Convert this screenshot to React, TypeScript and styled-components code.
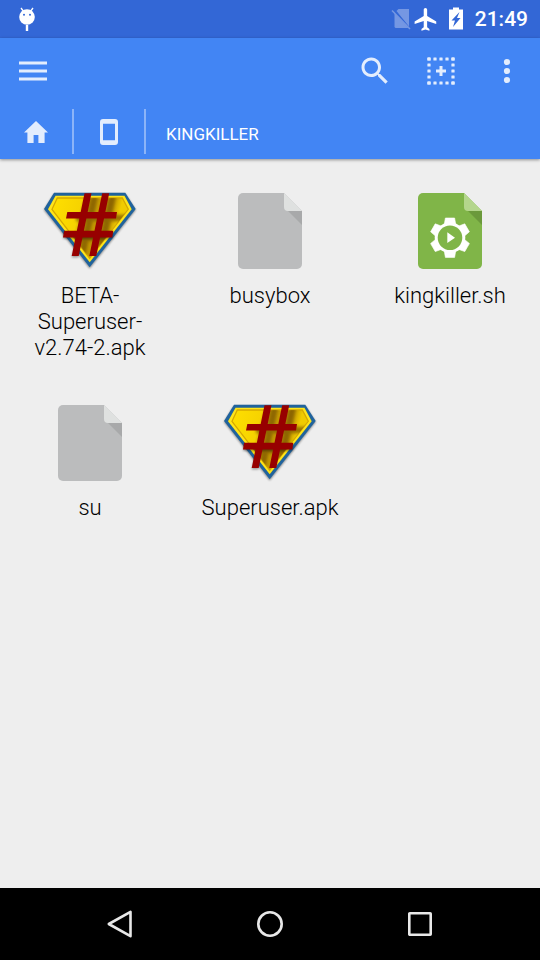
import React from "react";
import styled, { createGlobalStyle } from "styled-components";

const GlobalStyle = createGlobalStyle`
  *, *::before, *::after { box-sizing: border-box; }
  body { margin: 0; background: #eeeeee; font-family: Roboto, sans-serif; }
  button { border: 0; padding: 0; margin: 0; background: none; color: inherit; font: inherit; cursor: pointer; }
  svg { display: block; }
`;

const Screen = styled.div`
  min-height: 100vh;
  display: flex;
  flex-direction: column;
  background: #eeeeee;
`;

const StatusBar = styled.div`
  height: 38px;
  padding: 0 12px 0 15px;
  display: flex;
  align-items: center;
  justify-content: space-between;
  background: #3367d6;
  color: #ffffff;
`;

const StatusIcons = styled.div`
  display: flex;
  align-items: center;
`;

const Clock = styled.time`
  margin-left: 3px;
  font-size: 21px;
  line-height: 40px;
  font-weight: 500;
`;

const AppBar = styled.header`
  background: #4285f4;
  color: #e3edfd;
  box-shadow: 0 1px 3px rgba(0, 0, 0, 0.4);
`;

const Toolbar = styled.div`
  height: 66px;
  display: flex;
`;

const ToolButton = styled.button`
  width: 66px;
  height: 66px;
  display: flex;
  align-items: center;
  justify-content: center;
`;

const Spacer = styled.div`
  flex: 1;
`;

const Breadcrumbs = styled.nav`
  height: 55px;
  padding: 5px 0;
  display: flex;
`;

const IconCrumb = styled.button`
  width: 72px;
  display: flex;
  align-items: center;
  justify-content: center;
  border-right: 2px solid #8cb4f8;

  &:first-child { width: 74px; }
`;

const TextCrumb = styled.button`
  padding: 4px 20px 0;
  font-size: 17px;
  line-height: 24px;
  color: #ffffff;
`;

const FileGrid = styled.main`
  flex: 1;
  padding-top: 24px;
  display: grid;
  grid-template-columns: repeat(3, 1fr);
  align-content: start;
  row-gap: 34px;
`;

const FileTile = styled.button`
  padding: 0 18px;
  display: flex;
  flex-direction: column;
  align-items: center;
  justify-content: flex-start;
  gap: 4px;
`;

const FileName = styled.span`
  max-width: 140px;
  font-size: 22px;
  line-height: 26px;
  font-weight: 300;
  color: #000000;
  text-align: center;
`;

const NavBar = styled.nav`
  height: 72px;
  display: flex;
  justify-content: center;
  background: #000000;
`;

const NavButton = styled.button`
  width: 150px;
  display: flex;
  align-items: center;
  justify-content: center;
`;

const DebugIcon = () => (
  <svg width="24" height="28" viewBox="0 0 24 28" fill="#fff">
    <path d="M6 3l3 4M18 3l-3 4" stroke="#fff" strokeWidth="1.3" />
    <circle cx="12" cy="12" r="7.8" />
    <circle cx="9" cy="9.7" r="1" fill="#3367d6" />
    <circle cx="15" cy="9.7" r="1" fill="#3367d6" />
    <path d="M10.8 20h2.4v6h-2.4z" />
  </svg>
);

const NoSimIcon = () => (
  <svg width="24" height="26" viewBox="0 0 24 26">
    <path d="M10.500 3H21v17.500L8.500 5zM6.500 7l14 15H7.500l-1-1z" fill="#7597e3" />
    <path d="M4 4.500L22 23" stroke="#7597e3" strokeWidth="1.500" />
  </svg>
);

const AirplaneIcon = () => (
  <svg width="28" height="26" viewBox="0 0 24 24">
    <path
      transform="translate(-0.6 -0.3) scale(1.05)"
      fill="#fff"
      d="M21 16v-2l-8-5V3.500c0-.83-.67-1.500-1.500-1.500S10 2.670 10 3.500V9l-8 5v2l8-2.500V19l-2 1.500V22l3.500-1 3.500 1v-1.500L13 19v-5.500l8 2.500z"
    />
  </svg>
);

const BatteryIcon = () => (
  <svg width="32" height="26" viewBox="0 0 32 26">
    <path d="M13 1.500h6v2h4V23.500H9V3.500h4z" fill="#fff" />
    <path d="M19.500 6l-8 8.500h3.500l-2 6.500 7.500-9h-3.500z" fill="#3367d6" />
  </svg>
);

const MenuIcon = () => (
  <svg width="28" height="20" viewBox="0 0 28 20" fill="currentColor">
    <path d="M0 .5h28v3H0zM0 8.500h28v3H0zM0 16.500h28v3H0z" />
  </svg>
);

const SearchIcon = () => (
  <svg width="36" height="36" viewBox="0 0 24 24" fill="currentColor">
    <path d="M15.500 14h-.79l-.28-.27C15.410 12.590 16 11.110 16 9.500 16 5.910 13.090 3 9.500 3S3 5.910 3 9.500 5.910 16 9.500 16c1.610 0 3.090-.59 4.230-1.570l.27.28v.79l5 4.990L20.490 19l-4.990-5zm-6 0C7.010 14 5 11.990 5 9.500S7.010 5 9.500 5 14 7.010 14 9.500 11.990 14 9.500 14z" />
  </svg>
);

const ticks = [0, 6, 12, 18, 24];

const SelectIcon = () => (
  <svg width="28" height="28" viewBox="0 0 28 28" fill="currentColor">
    {ticks.map((t) => (
      <React.Fragment key={t}>
        <rect x={t + 0.4} y=".4" width="3.200" height="3.200" rx=".5" />
        <rect x={t + 0.4} y="24.400" width="3.200" height="3.200" rx=".5" />
        <rect x=".4" y={t + 0.4} width="3.200" height="3.200" rx=".5" />
        <rect x="24.400" y={t + 0.4} width="3.200" height="3.200" rx=".5" />
      </React.Fragment>
    ))}
    <path d="M12.500 9h3v3.500H19v3h-3.500V19h-3v-3.500H9v-3h3.500z" />
  </svg>
);

const MoreIcon = () => (
  <svg width="8" height="26" viewBox="0 0 8 26" fill="currentColor">
    <circle cx="4" cy="4" r="3.100" />
    <circle cx="4" cy="13" r="3.100" />
    <circle cx="4" cy="22" r="3.100" />
  </svg>
);

const HomeIcon = () => (
  <svg width="24" height="22" viewBox="0 0 24 22" fill="currentColor">
    <path d="M12 0L0 11.400h3.400V22h6.200v-8h4.800v8h6.200V11.400H24z" />
  </svg>
);

const PhoneIcon = () => (
  <svg width="18" height="26" viewBox="0 0 18 26" fill="currentColor">
    <path
      fillRule="evenodd"
      d="M3 0h12a3 3 0 0 1 3 3v20a3 3 0 0 1-3 3H3a3 3 0 0 1-3-3V3a3 3 0 0 1 3-3zM3 4.800v16.400h12V4.800z"
    />
  </svg>
);

const SuperuserIcon = () => (
  <svg width="96" height="96" viewBox="0 0 96 96">
    <defs>
      <linearGradient id="gold" x1="0" x2="1" y1="0" y2=".2">
        <stop offset="0" stopColor="#ffe000" />
        <stop offset=".38" stopColor="#f6d300" />
        <stop offset=".48" stopColor="#b88c00" />
        <stop offset=".6" stopColor="#c79b00" />
        <stop offset=".75" stopColor="#b48700" />
        <stop offset=".9" stopColor="#f0cb00" />
      </linearGradient>
      <clipPath id="face">
        <path d="M15.300 15h65l6 11.300-38.600 49L10 26.300z" />
      </clipPath>
      <filter id="soft" x="-20%" y="-20%" width="140%" height="140%">
        <feGaussianBlur stdDeviation="1.800" />
      </filter>
      <filter id="edge" x="-10%" y="-10%" width="120%" height="120%">
        <feGaussianBlur stdDeviation=".8" />
      </filter>
    </defs>
    <path d="M12 11h71.300l10.400 16-46 58.500L2 27z" fill="#000" opacity=".45" filter="url(#edge)" />
    <path d="M12 9.700h71.300L93.700 26l-46 58.200L2 26z" fill="#20639d" />
    <path d="M13.500 12.700h69l7.200 13.600-42 53L6 26.300z" fill="#ffe51a" />
    <path d="M15.300 15h65l6 11.300-38.600 49L10 26.300z" fill="url(#gold)" stroke="#d6a900" strokeWidth="1.300" />
    <g clipPath="url(#face)">
      <path d="M53 12L39 78M71 12L57 78M34 35h50M28 55h50" stroke="#7e5900" strokeWidth="6.500" opacity=".75" filter="url(#soft)" />
    </g>
    <path d="M22 49.500h49.300l-1 6.500H37.500l-.8 18.500h-7L34 56H21z" fill="#000" opacity=".35" filter="url(#edge)" />
    <path d="M42.500 10.300h7L36.700 73h-7zM60.200 10.300h7L54.300 73h-7zM25.300 29H75l-1 6.500H24zM22 47.800h49.300l-1 6.700H21z" fill="#970000" />
  </svg>
);

const Page = ({ color, fold, shade }: { color: string; fold: string; shade: string }) => (
  <>
    <path d="M21 10h41l18 18v53a5 5 0 0 1-5 5H21a5 5 0 0 1-5-5V15a5 5 0 0 1 5-5z" fill={color} />
    <path d="M66 28h14v14z" fill={shade} />
    <path d="M62 10l18 18H66a4 4 0 0 1-4-4z" fill={fold} />
  </>
);

const BlankFileIcon = () => (
  <svg width="96" height="96" viewBox="0 0 96 96">
    <Page color="#bbbcbd" fold="#dfe1e0" shade="#a8a9aa" />
  </svg>
);

const ScriptFileIcon = () => (
  <svg width="96" height="96" viewBox="0 0 96 96">
    <Page color="#80b548" fold="#b4d68c" shade="#6b993b" />
    <g transform="translate(48 54.700)">
      {[0, 60, 120, 180, 240, 300].map((angle) => (
        <path
          key={angle}
          transform={`rotate(${angle})`}
          d="M-4.600-19.700h9.200l1.200 6.700h-11.600z"
          fill="#fff"
          stroke="#fff"
          strokeWidth=".6"
          strokeLinejoin="round"
        />
      ))}
      <circle r="15.300" fill="#fff" />
      <circle r="12.300" fill="#80b548" />
      <path d="M-2.700-5.400L5 0l-7.700 5.400z" fill="#fff" />
    </g>
  </svg>
);

const files = [
  { name: "BETA-Superuser-v2.74-2.apk", Icon: SuperuserIcon },
  { name: "busybox", Icon: BlankFileIcon },
  { name: "kingkiller.sh", Icon: ScriptFileIcon },
  { name: "su", Icon: BlankFileIcon },
  { name: "Superuser.apk", Icon: SuperuserIcon },
];

export default function App() {
  return (
    <Screen>
      <GlobalStyle />
      <StatusBar>
        <DebugIcon />
        <StatusIcons>
          <NoSimIcon />
          <AirplaneIcon />
          <BatteryIcon />
          <Clock>21:49</Clock>
        </StatusIcons>
      </StatusBar>
      <AppBar>
        <Toolbar>
          <ToolButton aria-label="Menu"><MenuIcon /></ToolButton>
          <Spacer />
          <ToolButton aria-label="Search"><SearchIcon /></ToolButton>
          <ToolButton aria-label="Select all"><SelectIcon /></ToolButton>
          <ToolButton aria-label="More options"><MoreIcon /></ToolButton>
        </Toolbar>
        <Breadcrumbs aria-label="Path">
          <IconCrumb aria-label="Home"><HomeIcon /></IconCrumb>
          <IconCrumb aria-label="Device storage"><PhoneIcon /></IconCrumb>
          <TextCrumb>KINGKILLER</TextCrumb>
        </Breadcrumbs>
      </AppBar>
      <FileGrid>
        {files.map(({ name, Icon }) => (
          <FileTile key={name}>
            <Icon />
            <FileName>{name}</FileName>
          </FileTile>
        ))}
      </FileGrid>
      <NavBar aria-label="System">
        <NavButton aria-label="Back">
          <svg width="30" height="30" viewBox="0 0 30 30" fill="none" stroke="#e8e8e8" strokeWidth="2.600" strokeLinejoin="round">
            <path d="M25.500 2.800v24.400L3.800 15z" />
          </svg>
        </NavButton>
        <NavButton aria-label="Home">
          <svg width="30" height="30" viewBox="0 0 30 30" fill="none" stroke="#e8e8e8" strokeWidth="2.600">
            <circle cx="15" cy="15" r="11.700" />
          </svg>
        </NavButton>
        <NavButton aria-label="Recent apps">
          <svg width="30" height="30" viewBox="0 0 30 30" fill="none" stroke="#e8e8e8" strokeWidth="2.600" strokeLinejoin="round">
            <rect x="4.300" y="4.300" width="21.400" height="21.400" rx=".5" />
          </svg>
        </NavButton>
      </NavBar>
    </Screen>
  );
}
